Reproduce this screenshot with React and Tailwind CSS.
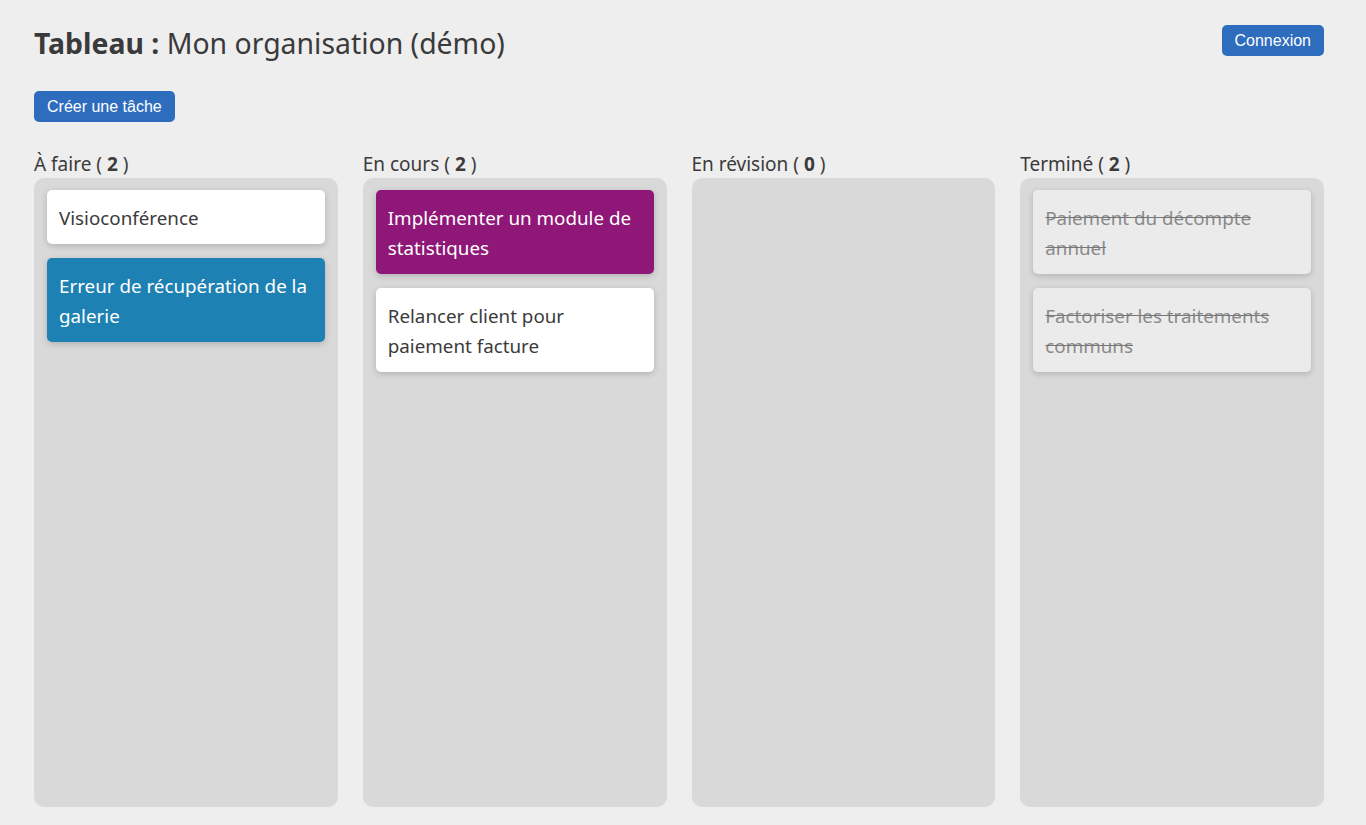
import React from "react";

const font = { fontFamily: '"Segoe UI", "Noto Sans", sans-serif' };

function Card({ text, variant }) {
  const base =
    "rounded-[5px] px-3 pt-[13px] pb-[11px] text-[18.8px] leading-[30px] shadow-[0_2px_6px_rgba(0,0,0,0.18)]";
  const cls =
    variant === "blue"
      ? "bg-[#1e81b3] text-white"
      : variant === "purple"
      ? "bg-[#8e1777] text-white"
      : variant === "done"
      ? "bg-[#ebebeb] text-[#8a8a8a] line-through decoration-[#777]"
      : "bg-white text-[#3b3b3b]";
  return <div className={`${base} ${cls}`}>{text}</div>;
}

function Column({ title, count, cards }) {
  return (
    <div className="flex flex-col">
      <div className="text-[19px] leading-[26px] text-[#3b3b3b] mb-[1px]">
        {title} ( <span className="font-bold">{count}</span> )
      </div>
      <div className="h-[629px] rounded-[10px] bg-[#d9d9d9] p-[13px] pt-[12px] flex flex-col gap-[14px]">
        {cards.map((c, i) => (
          <Card key={i} text={c.text} variant={c.variant} />
        ))}
      </div>
    </div>
  );
}

export default function App() {
  return (
    <div className="min-h-[825px] bg-[#eeeeee]" style={font}>
      <div className="pl-[34px] pr-[42px] pt-[25px]">
        <div className="flex items-start justify-between">
          <h1 className="text-[28.4px] leading-[36px] text-[#3a3a3a]">
            <span className="font-bold">Tableau :</span> Mon organisation (démo)
          </h1>
          <button
            className="h-[31px] px-[13px] rounded-[5px] bg-[#2e6dbd] text-white text-[16px]"
            style={{ fontFamily: '"Liberation Sans", Arial, sans-serif' }}
          >
            Connexion
          </button>
        </div>
        <button
          className="mt-[30px] h-[31px] px-[13px] rounded-[5px] bg-[#2e6dbd] text-white text-[16px]"
          style={{ fontFamily: '"Liberation Sans", Arial, sans-serif' }}
        >
          Créer une tâche
        </button>
        <div className="mt-[29px] grid grid-cols-4 gap-[25px]">
          <Column
            title="À faire"
            count={2}
            cards={[
              { text: "Visioconférence" },
              { text: "Erreur de récupération de la galerie", variant: "blue" },
            ]}
          />
          <Column
            title="En cours"
            count={2}
            cards={[
              { text: "Implémenter un module de statistiques", variant: "purple" },
              { text: "Relancer client pour paiement facture" },
            ]}
          />
          <Column title="En révision" count={0} cards={[]} />
          <Column
            title="Terminé"
            count={2}
            cards={[
              { text: "Paiement du décompte annuel", variant: "done" },
              { text: "Factoriser les traitements communs", variant: "done" },
            ]}
          />
        </div>
      </div>
    </div>
  );
}
